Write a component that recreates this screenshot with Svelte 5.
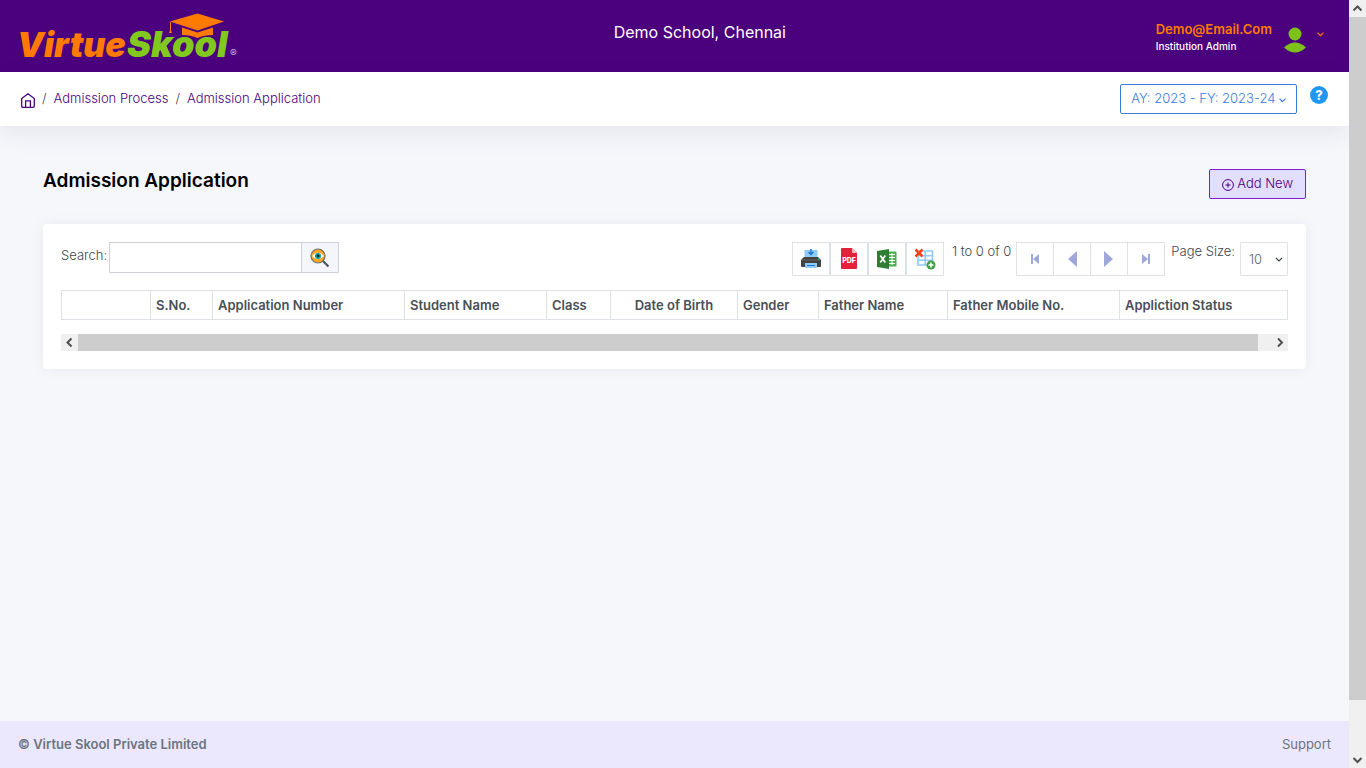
<script lang="ts">
	interface Column {
		title: string;
		width: number;
		center?: boolean;
	}

	const columns: Column[] = [
		{ title: '', width: 89 },
		{ title: 'S.No.', width: 62 },
		{ title: 'Application Number', width: 192 },
		{ title: 'Student Name', width: 142 },
		{ title: 'Class', width: 64 },
		{ title: 'Date of Birth', width: 127, center: true },
		{ title: 'Gender', width: 81 },
		{ title: 'Father Name', width: 129 },
		{ title: 'Father Mobile No.', width: 172 },
		{ title: 'Appliction Status', width: 168 }
	];
	const total = columns.reduce((sum, column) => sum + column.width, 0);

	let search = $state('');
	let pageSize = $state('10');
</script>

<div class="screen">
	<div class="page">
		<header class="topbar">
			<a class="logo" href="#home" aria-label="VirtueSkool">
				<svg width="224" height="52" viewBox="0 0 224 52">
					<text x="-3" y="47" class="brand orange">Virtue</text>
					<text x="107" y="47" class="brand green">Skool</text>
					<path d="M150 11.500 177.500 3.500 204 11.500 177.500 20.500z" fill="#ff7a00" />
					<path d="M162 17.500v7.500q9 0 15.500 3 6.500-3 15.500-3v-7.500l-15.500 5z" fill="#ff7a00" />
					<path d="M150.500 12v11" stroke="#ff7a00" stroke-width="1" fill="none" />
					<path d="m150.500 19 1.500 4h-3z" fill="#ff7a00" />
					<text x="210" y="47" class="reg">®</text>
				</svg>
			</a>
			<h1>Demo School, Chennai</h1>
			<button class="user">
				<span class="who">
					<b>Demo@Email.Com</b>
					<small>Institution Admin</small>
				</span>
				<svg width="22" height="26" viewBox="0 0 22 26" fill="#7cc21a">
					<circle cx="11" cy="7" r="6.500" />
					<path d="M0 20.500q11-10 22 0-11 10-22 0z" />
				</svg>
				<svg class="caret" width="7" height="5" viewBox="0 0 7 5"><path d="m.5.700 3 3 3-3" /></svg>
			</button>
		</header>

		<nav class="crumbs">
			<a class="home" href="#home" aria-label="Home">
				<svg width="14" height="15" viewBox="0 0 14 15"><path d="M.7 5.500 7 .8l6.300 4.700v7.400q0 1.400-1.400 1.400H2.100Q.7 14.300.7 12.900zM4.600 14V7.800h4.800V14" /></svg>
			</a>
			<span>/</span>
			<a href="#process">Admission Process</a>
			<span>/</span>
			<a href="#application">Admission Application</a>
			<button class="year">
				AY: 2023 - FY: 2023-24
				<svg class="caret" width="7" height="5" viewBox="0 0 7 5"><path d="m.5.700 3 3 3-3" /></svg>
			</button>
			<button class="help" aria-label="Help">?</button>
		</nav>

		<main>
			<div class="heading">
				<h2>Admission Application</h2>
				<button class="add">
					<svg width="12" height="12" viewBox="0 0 12 12"><circle cx="6" cy="6" r="5.400" /><path d="M6 3.500v5M3.500 6h5" /></svg>
					Add New
				</button>
			</div>

			<section class="card">
				<div class="tools">
					<label for="search">Search:</label>
					<div class="search">
						<input id="search" type="text" bind:value={search} />
						<button aria-label="Search">
							<svg width="20" height="20" viewBox="0 0 20 20">
								<path d="m12.500 12.500 6 6" stroke="#455a64" stroke-width="2.200" />
								<circle cx="8" cy="8" r="7" fill="#ffa726" stroke="#6b6f72" stroke-width="1.200" />
								<path d="M2 8q6-6.500 12 0-6 6.500-12 0z" fill="#fff" />
								<circle cx="8" cy="8" r="3" fill="#00a99d" />
								<circle cx="8" cy="8" r="1.400" fill="#123" />
							</svg>
						</button>
					</div>

					<div class="group exports">
						<button aria-label="Print">
							<svg width="20" height="20" viewBox="0 0 20 20">
								<path d="M3.500 1h13v9h-13z" fill="#90caf9" />
								<path d="M10 0v5M7.500 3 10 5.500 12.500 3" fill="none" stroke="#1976d2" stroke-width="1.400" />
								<path d="M3 8h14l3 3v6q0 1-1 1H1q-1 0-1-1v-6z" fill="#424242" />
								<path d="M1 11h18" stroke="#616161" />
								<path d="M4 14h12v5H4z" fill="#90caf9" />
								<path d="M6 16.500h8" stroke="#1976d2" />
								<circle cx="17.500" cy="10" r=".7" fill="#00e676" />
							</svg>
						</button>
						<button aria-label="Export PDF">
							<svg width="18" height="22" viewBox="0 0 18 22">
								<path d="M2 0h10l5 5v15q0 1-1 1H2q-1 0-1-1V1q0-1 1-1z" fill="#e5203a" />
								<path d="m12 0 5 5h-5z" fill="#f9b4bd" />
								<text x="9" y="15" class="pdf">PDF</text>
							</svg>
						</button>
						<button aria-label="Export Excel">
							<svg width="20" height="20" viewBox="0 0 20 20">
								<path d="M11 2.500h8q.5 0 .5.500v14q0 .5-.5.500h-8z" fill="#4caf50" />
								<path d="M12 5.500h6M12 8.500h6M12 11.500h6M12 14.500h6M15 4v12" stroke="#fff" stroke-width="1" />
								<path d="M0 2 12 0v20L0 18z" fill="#2e7d32" />
								<path d="m3.300 6.500 5 7m0-7-5 7" stroke="#fff" stroke-width="1.700" />
							</svg>
						</button>
						<button aria-label="Clear table filters">
							<svg width="22" height="22" viewBox="0 0 22 22">
								<path d="M4 3h14.500v14H4zM4 7.700h14.500M4 12.300h14.500M11.200 3v14" fill="#fff" stroke="#90caf9" stroke-width="1.600" />
								<path d="m1.500 1.500 7 7m0-7-7 7" stroke="#f4431c" stroke-width="2.500" />
								<circle cx="17" cy="17" r="4.500" fill="#43a047" />
								<path d="M17 14.500v5M14.500 17h5" stroke="#fff" stroke-width="1.500" />
							</svg>
						</button>
					</div>
					<span class="range">1 to 0 of 0</span>
					<div class="group pager">
						<button aria-label="First page"><svg width="10" height="10" viewBox="0 0 10 10"><path d="M1 0h2v10H1zM9 0v10L3 5z" /></svg></button>
						<button aria-label="Previous page"><svg width="10" height="16" viewBox="0 0 10 16"><path d="M10 0v16L1 8z" /></svg></button>
						<button aria-label="Next page"><svg width="10" height="16" viewBox="0 0 10 16"><path d="M0 0v16l9-8z" /></svg></button>
						<button aria-label="Last page"><svg width="10" height="10" viewBox="0 0 10 10"><path d="M7 0h2v10H7zM1 0v10l6-5z" /></svg></button>
					</div>
					<label class="size-label" for="size">Page Size:</label>
					<div class="size">
						<select id="size" bind:value={pageSize}>
							<option>10</option>
							<option>25</option>
							<option>50</option>
						</select>
						<svg class="caret" width="8" height="6" viewBox="0 0 8 6"><path d="m1 1 3 3 3-3" /></svg>
					</div>
				</div>

				<table>
					<thead>
						<tr>
							{#each columns as column}
								<th class:center={column.center} style="width: {(column.width / total) * 100}%">{column.title}</th>
							{/each}
						</tr>
					</thead>
				</table>

				<div class="hscroll">
					<svg width="17" height="17" viewBox="0 0 17 17"><path d="m10.500 4.500-4 4 4 4" /></svg>
					<div class="thumb"></div>
					<svg width="17" height="17" viewBox="0 0 17 17"><path d="m7 4.500 4 4-4 4" /></svg>
				</div>
			</section>
		</main>

		<footer>
			<b>© Virtue Skool Private Limited</b>
			<a href="#support">Support</a>
		</footer>
	</div>

	<div class="vscroll">
		<svg width="17" height="17" viewBox="0 0 17 17"><path d="m4.500 10.500 4-4 4 4" /></svg>
		<div class="thumb"></div>
		<svg width="17" height="17" viewBox="0 0 17 17"><path d="m4.500 7 4 4 4-4" /></svg>
	</div>
</div>

<style>
	:global(body) {
		margin: 0;
		font-family: Inter, 'Liberation Sans', sans-serif;
		font-size: 13px;
		font-weight: 300;
		line-height: 19px;
		color: #3e4650;
	}

	* {
		box-sizing: border-box;
	}

	button,
	input,
	select {
		font: inherit;
		margin: 0;
		padding: 0;
		cursor: pointer;
	}

	a {
		color: #4b0082;
		text-decoration: none;
	}

	.screen {
		display: flex;
		min-height: 100vh;
	}

	.page {
		flex: 1;
		display: flex;
		flex-direction: column;
		background: #f5f7fb;
	}

	.topbar {
		display: flex;
		justify-content: space-between;
		height: 72px;
		padding: 0 25px 0 20px;
		background: #4b007d;
		color: #fff;
	}

	.logo {
		padding-top: 10px;
	}

	.logo svg {
		overflow: visible;
	}

	.brand {
		font-family: Inter, sans-serif;
		font-size: 34px;
		font-weight: 900;
		font-style: italic;
	}

	.orange {
		fill: #ff7a00;
	}

	.green {
		font-size: 36px;
		fill: #82c91e;
	}

	.reg {
		font-size: 10px;
		fill: #e8dcf4;
	}

	h1 {
		margin: 23px 0 0;
		font-size: 16px;
		font-weight: 400;
	}

	.user {
		display: flex;
		align-items: flex-start;
		padding-top: 20px;
		border: 0;
		background: none;
		color: #fff;
		text-align: left;
	}

	.user > svg:not(.caret) {
		margin: 7px 11px 0 12px;
	}

	.caret {
		fill: none;
		stroke: currentColor;
		stroke-width: 1.200;
	}

	.user .caret {
		margin-top: 12px;
		stroke: #ff7a00;
	}

	.who b {
		display: block;
		font-weight: 600;
		color: #ff7a00;
	}

	.who small {
		display: block;
		font-size: 10px;
		font-weight: 500;
		line-height: 14px;
	}

	.crumbs {
		display: flex;
		align-items: flex-start;
		gap: 7px;
		height: 54px;
		padding: 12px 21px;
		background: #fff;
		box-shadow: 0 8px 24px rgba(40, 40, 80, 0.08);
	}

	.crumbs > a,
	.crumbs > span {
		padding-top: 5px;
	}

	.crumbs .home {
		padding-top: 9px;
	}

	.home svg {
		display: block;
		fill: none;
		stroke: #4b0082;
		stroke-width: 1.300;
	}

	.year {
		height: 30px;
		margin-left: auto;
		padding: 0 10px 2px;
		border: 1px solid #3b7ddd;
		border-radius: 2px;
		background: #fff;
		color: #3b7ddd;
	}

	.help {
		width: 18px;
		height: 18px;
		margin: 2px 0 0 6px;
		border: 0;
		border-radius: 50%;
		background: #2196f3;
		color: #fff;
		font-size: 13px;
		font-weight: 800;
		line-height: 18px;
	}

	main {
		flex: 1;
		padding: 43px 43px 0;
	}

	.heading {
		display: flex;
		justify-content: space-between;
		margin-bottom: 25px;
	}

	h2 {
		margin: 0;
		font-size: 19px;
		font-weight: 600;
		line-height: 24px;
		color: #000;
	}

	.add {
		height: 30px;
		padding: 0 12px 1px;
		border: 1px solid #7c1fd1;
		border-radius: 2px;
		background: #e2deff;
		color: #4b0082;
	}

	.add svg {
		vertical-align: -3px;
		fill: none;
		stroke: currentColor;
	}

	.card {
		padding: 18px;
		border-radius: 4px;
		background: #fff;
		box-shadow: 0 0 14px rgba(40, 40, 80, 0.06);
	}

	.tools {
		display: flex;
		align-items: flex-start;
		height: 48px;
	}

	.tools > label {
		padding-top: 4px;
	}

	.search {
		display: flex;
		height: 31px;
		margin: 0 auto 0 2px;
	}

	.search input {
		width: 193px;
		padding: 0 8px;
		border: 1px solid #ced0da;
		outline: 0;
	}

	.search button {
		display: grid;
		place-items: center;
		width: 38px;
		margin-left: -1px;
		border: 1px solid #ced0da;
		background: #f5f6fb;
	}

	.group {
		display: flex;
		height: 34px;
	}

	.group button {
		display: grid;
		place-items: center;
		width: 38px;
		border: 1px solid #dee2e6;
		background: #fff;
	}

	.pager button {
		fill: #9fa8da;
	}

	.pager button + button {
		margin-left: -1px;
	}

	.pdf {
		font-size: 7px;
		font-weight: 800;
		fill: #fff;
		text-anchor: middle;
	}

	.range {
		padding: 0 5px 0 8px;
	}

	.tools > .size-label {
		padding: 0 5px 0 6px;
	}

	.size {
		position: relative;
	}

	.size select {
		display: block;
		width: 48px;
		height: 34px;
		padding: 0 8px;
		border: 1px solid #dee2e6;
		border-radius: 1px;
		appearance: none;
		background: #fff;
		color: #5c656d;
	}

	.size .caret {
		position: absolute;
		top: 15px;
		right: 5px;
		pointer-events: none;
	}

	table {
		width: 100%;
		table-layout: fixed;
		border-collapse: collapse;
	}

	th {
		height: 29px;
		padding: 0 5px;
		border: 1px solid #dee2e6;
		font-weight: 600;
		color: #495057;
		text-align: left;
		white-space: nowrap;
	}

	th.center {
		text-align: center;
	}

	.hscroll {
		display: flex;
		height: 17px;
		margin-top: 14px;
		background: #f0f0f0;
	}

	.hscroll .thumb {
		flex: 1;
		margin-right: 13px;
		background: #cdcdcd;
	}

	.hscroll svg,
	.vscroll svg {
		flex: none;
		fill: none;
		stroke: #505050;
		stroke-width: 2;
	}

	.vscroll {
		display: flex;
		flex-direction: column;
		width: 17px;
		background: #f0f0f0;
	}

	.vscroll .thumb {
		flex: 1;
		margin-bottom: 51px;
		background: #cdcdcd;
	}

	footer {
		display: flex;
		justify-content: space-between;
		padding: 14px 18px;
		background: #ebe7fd;
		color: #6c757d;
	}

	footer b {
		font-weight: 600;
	}

	footer a {
		color: #6c757d;
		font-weight: 400;
	}
</style>
